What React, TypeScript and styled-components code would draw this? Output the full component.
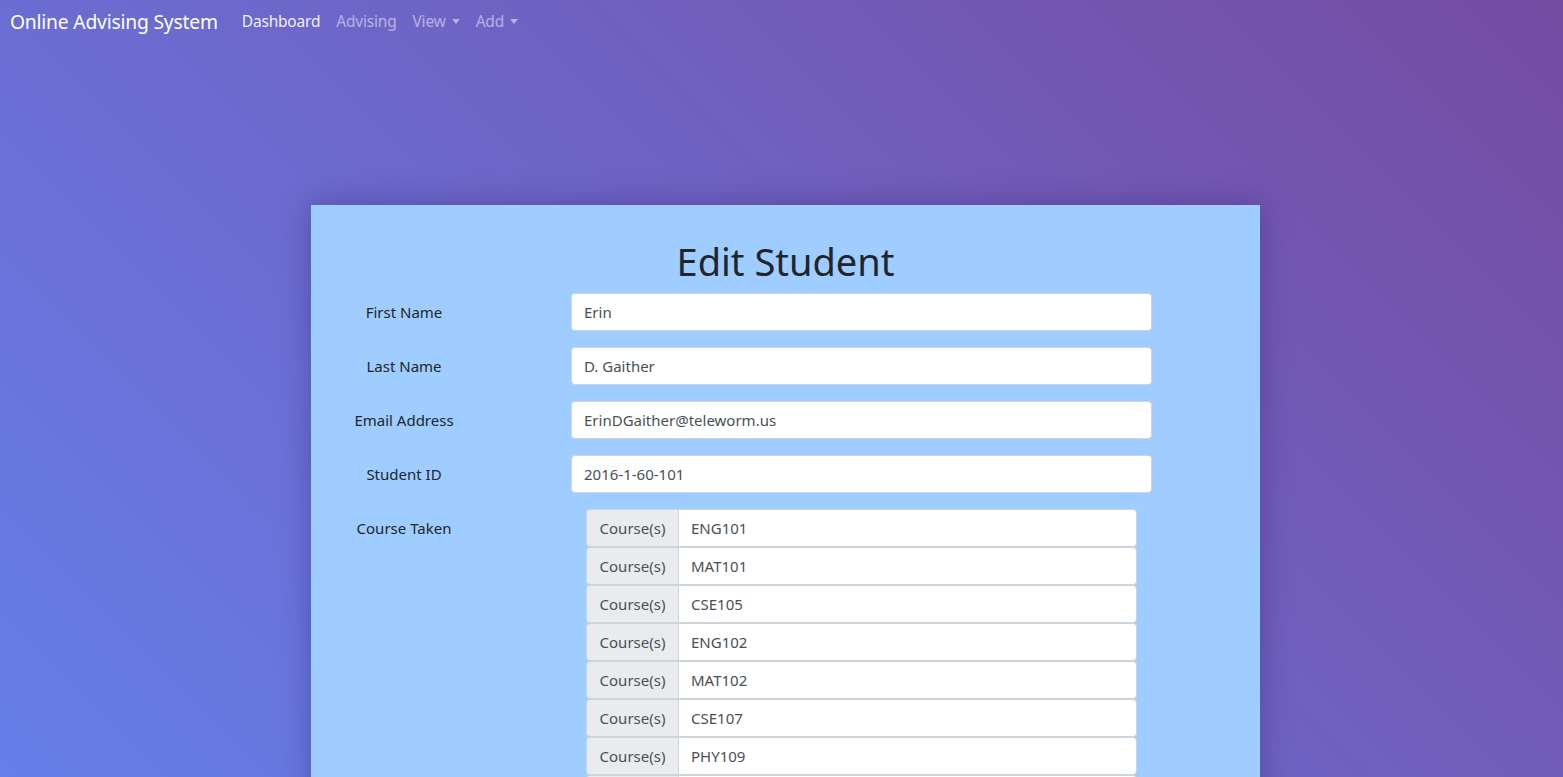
import React from "react";
import styled, { createGlobalStyle } from "styled-components";

const Global = createGlobalStyle`
  html, body { margin: 0; padding: 0; }
  body {
    font-family: "Noto Sans", "Open Sans", sans-serif;
    font-size: 15px;
    color: #212529;
    background: linear-gradient(45deg, #667eea 0%, #764ba2 100%) fixed;
    min-height: 100vh;
  }
  * { box-sizing: border-box; }
`;

const Nav = styled.nav`
  display: flex;
  align-items: center;
  height: 42px;
  padding: 0 10px;
`;

const Brand = styled.a`
  font-size: 19.3px;
  color: #fff;
  margin-right: 16px;
  white-space: nowrap;
  letter-spacing: -0.2px;
`;

const NavLink = styled.a<{ $active?: boolean; $toggle?: boolean }>`
  padding: 0 8px;
  font-size: 15.5px;
  letter-spacing: -0.2px;
  color: ${(p) => (p.$active ? "rgba(255,255,255,0.92)" : "rgba(255,255,255,0.5)")};
  display: flex;
  align-items: center;
  ${(p) =>
    p.$toggle &&
    `&::after {
      content: "";
      display: inline-block;
      margin-left: 6px;
      margin-top: 1px;
      border-top: 5px solid;
      border-left: 4.5px solid transparent;
      border-right: 4.5px solid transparent;
    }`}
`;

const Main = styled.main`
  display: flex;
  justify-content: center;
  padding-top: 163px;
  padding-left: 8px;
`;

const Card = styled.section`
  width: 949px;
  background: #9fcdff;
  box-shadow: 0 0 28px rgba(40, 20, 90, 0.35);
  padding: 32px 108px 40px 30px;
`;

const Title = styled.h1`
  margin: 0 0 8px 0;
  font-size: 38px;
  font-weight: 400;
  line-height: 48px;
  text-align: center;
  padding-left: 78px;
  color: #212529;
`;

const Row = styled.div`
  display: grid;
  grid-template-columns: 126px 1fr;
  column-gap: 104px;
  margin-bottom: 16px;
  align-items: start;
`;

const Label = styled.label`
  text-align: center;
  line-height: 38px;
  font-size: 15px;
`;

const Input = styled.input`
  display: block;
  width: 100%;
  height: 38px;
  padding: 0 12px;
  font-family: inherit;
  font-size: 15px;
  color: #495057;
  background: #fff;
  border: 1px solid #ced4da;
  border-radius: 4px;
  outline: none;
`;

const Groups = styled.div`
  display: flex;
  flex-direction: column;
  padding: 0 15px;
`;

const Group = styled.div`
  display: flex;
  height: 38px;
`;

const Prepend = styled.span`
  width: 92px;
  flex: none;
  display: flex;
  align-items: center;
  justify-content: center;
  background: #e9ecef;
  color: #495057;
  border: 1px solid #ced4da;
  border-right: none;
  border-radius: 4px 0 0 4px;
  font-size: 15px;
`;

const GroupInput = styled(Input)`
  flex: 1;
  border-radius: 0 4px 4px 0;
`;

const fields = [
  ["First Name", "Erin"],
  ["Last Name", "D. Gaither"],
  ["Email Address", "ErinDGaither@teleworm.us"],
  ["Student ID", "2016-1-60-101"],
];

const courses = ["ENG101", "MAT101", "CSE105", "ENG102", "MAT102", "CSE107", "PHY109", "CSE110", "MAT104", "CSE225"];

export default function App() {
  return (
    <>
      <Global />
      <Nav>
        <Brand>Online Advising System</Brand>
        <NavLink $active>Dashboard</NavLink>
        <NavLink>Advising</NavLink>
        <NavLink $toggle>View</NavLink>
        <NavLink $toggle>Add</NavLink>
      </Nav>
      <Main>
        <Card>
          <Title>Edit Student</Title>
          {fields.map(([l, v]) => (
            <Row key={l}>
              <Label>{l}</Label>
              <Input defaultValue={v} />
            </Row>
          ))}
          <Row>
            <Label>Course Taken</Label>
            <Groups>
              {courses.map((c, i) => (
                <Group key={i}>
                  <Prepend>Course(s)</Prepend>
                  <GroupInput defaultValue={c} />
                </Group>
              ))}
            </Groups>
          </Row>
        </Card>
      </Main>
    </>
  );
}
